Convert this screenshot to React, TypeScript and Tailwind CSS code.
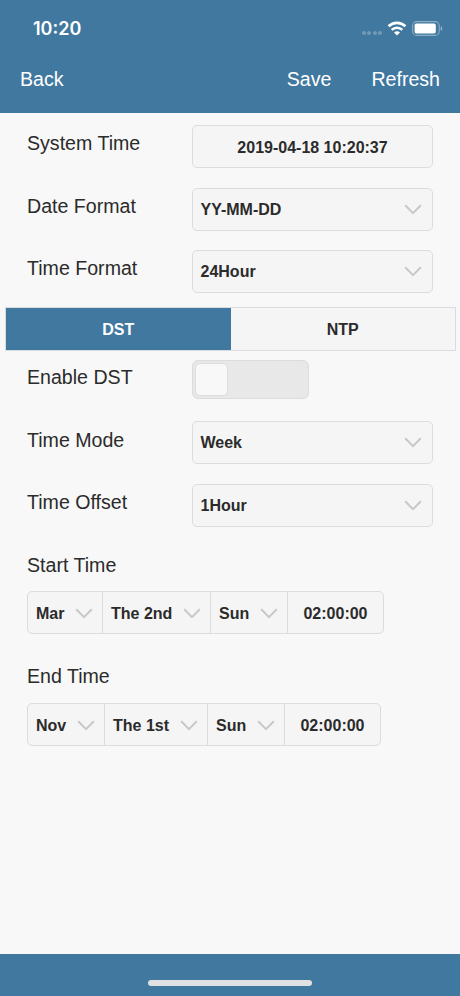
import React from 'react';
import clsx from 'clsx';

function Chevron({ className }: { className?: string }) {
  return (
    <svg viewBox="0 0 18 11" className={clsx('w-[18px] h-[11px] shrink-0', className)} fill="none" aria-hidden="true">
      <path d="M1.2 1.3 9 9.2l7.8-7.9" stroke="#c8c8c8" strokeWidth="2" />
    </svg>
  );
}

function StatusBar() {
  return (
    <div className="h-[57px] flex items-center justify-between pl-[33px] pr-[17px]">
      <span className="font-['Inter',sans-serif] text-[18px] leading-none font-semibold">10:20</span>
      <div className="flex items-center">
        <div className="flex gap-[1.5px] mt-[9px] mr-[5px]">
          {[0, 1, 2, 3].map((dot) => (
            <span key={dot} className="size-[4px] rounded-full bg-white/25" />
          ))}
        </div>
        <svg viewBox="0 0 20 15" className="w-[20px] h-[15px] mr-[5px]" fill="none" aria-hidden="true">
          <path d="M1.6 5.3a12 12 0 0 1 16.8 0" stroke="#fff" strokeWidth="2.7" />
          <path d="M4.7 8.8a7.6 7.6 0 0 1 10.6 0" stroke="#fff" strokeWidth="2.5" />
          <path d="M10 14.6 7 11.5a4.2 4.2 0 0 1 6 0z" fill="#fff" />
        </svg>
        <svg viewBox="0 0 31 15" className="w-[31px] h-[15px]" fill="none" aria-hidden="true">
          <rect x="0.6" y="0.6" width="26.6" height="13.8" rx="4" stroke="#fff" strokeOpacity="0.4" strokeWidth="1.1" />
          <rect x="2.6" y="2.6" width="21.2" height="9.8" rx="1.6" fill="#fff" />
          <path d="M28.8 5.2c1.9.7 1.9 3.9 0 4.6z" fill="#fff" fillOpacity="0.5" />
        </svg>
      </div>
    </div>
  );
}

type RowProps = { label: string; className?: string; labelClassName?: string; children: React.ReactNode };

function Row({ label, className, labelClassName = 'leading-[36px]', children }: RowProps) {
  return (
    <div className={clsx('flex items-start pl-[27px]', className)}>
      <span className={clsx('w-[165px] shrink-0 text-[19.6px]', labelClassName)}>{label}</span>
      {children}
    </div>
  );
}

const FIELD = 'h-[43px] w-[241px] flex items-center rounded-[5px] border border-[#dcdcdc] bg-[#f5f5f5] text-[16px] font-bold';

function Select({ value }: { value: string }) {
  return (
    <button className={clsx(FIELD, 'justify-between pl-[7.5px] pr-[10px]')}>
      {value}
      <Chevron />
    </button>
  );
}

type Segment = { value: string; width: string };

function TimeGroup({ segments }: { segments: Segment[] }) {
  return (
    <div className="ml-[27px] h-[43px] w-fit flex rounded-[5px] border border-[#dcdcdc] bg-[#f5f5f5] text-[16px] font-bold">
      {segments.map(({ value, width }) => (
        <button key={value} className={clsx('flex items-center justify-between border-r border-[#dcdcdc] pt-[2px] pl-2 pr-[9.5px] whitespace-nowrap', width)}>
          {value}
          <Chevron />
        </button>
      ))}
      <button className="w-[95px] pt-[2px] text-center">02:00:00</button>
    </div>
  );
}

export default function App() {
  return (
    <div className="w-[460px] h-[996px] flex flex-col bg-[#f8f8f8] text-[#2b2b2b] font-['Liberation_Sans',sans-serif]">
      <header className="h-[113px] shrink-0 bg-[#41789f] text-white">
        <StatusBar />
        <nav className="flex items-center px-[20px] h-[46px] text-[19.6px]">
          <button>Back</button>
          <button className="ml-auto">Save</button>
          <button className="ml-[40px]">Refresh</button>
        </nav>
      </header>

      <main className="flex-1 pt-[12px]">
        <Row label="System Time">
          <div className={clsx(FIELD, 'justify-center pt-[2px]')}>2019-04-18 10:20:37</div>
        </Row>
        <Row label="Date Format" className="mt-[20px]">
          <Select value="YY-MM-DD" />
        </Row>
        <Row label="Time Format" className="mt-[19px]">
          <Select value="24Hour" />
        </Row>

        <div className="mx-[5px] mt-[14px] h-[44px] w-[451px] grid grid-cols-2 border border-[#d9dcdf] text-[16px] font-bold">
          <button className="bg-[#41789f] text-white pt-[2px]">DST</button>
          <button className="bg-[#f5f5f5] pt-[2px]">NTP</button>
        </div>

        <Row label="Enable DST" className="mt-[9px]" labelClassName="leading-[34px]">
          <button role="switch" aria-checked="false" className="h-[39px] w-[117px] rounded-[6px] border border-[#dcdcdc] bg-[#e8e8e8] p-[2px]">
            <span className="block h-[33px] w-[33px] rounded-[5px] border border-[#dedede] bg-[#f8f8f8]" />
          </button>
        </Row>
        <Row label="Time Mode" className="mt-[22px]" labelClassName="leading-[38px]">
          <Select value="Week" />
        </Row>
        <Row label="Time Offset" className="mt-[20px]">
          <Select value="1Hour" />
        </Row>

        <h2 className="pl-[27px] mt-[20px] text-[19.6px] leading-[36px]">Start Time</h2>
        <div className="mt-[8px]">
          <TimeGroup
            segments={[
              { value: 'Mar', width: 'w-[75px]' },
              { value: 'The 2nd', width: 'w-[108px]' },
              { value: 'Sun', width: 'w-[77px]' },
            ]}
          />
        </div>
        <h2 className="pl-[27px] mt-[24px] text-[19.6px] leading-[36px]">End Time</h2>
        <div className="mt-[9px]">
          <TimeGroup
            segments={[
              { value: 'Nov', width: 'w-[77px]' },
              { value: 'The 1st', width: 'w-[103px]' },
              { value: 'Sun', width: 'w-[77px]' },
            ]}
          />
        </div>
      </main>

      <footer className="h-[42px] shrink-0 flex justify-center bg-[#41789f] pt-[26px]">
        <div className="h-[6px] w-[164px] rounded-full bg-[#e0e1e2]" />
      </footer>
    </div>
  );
}
